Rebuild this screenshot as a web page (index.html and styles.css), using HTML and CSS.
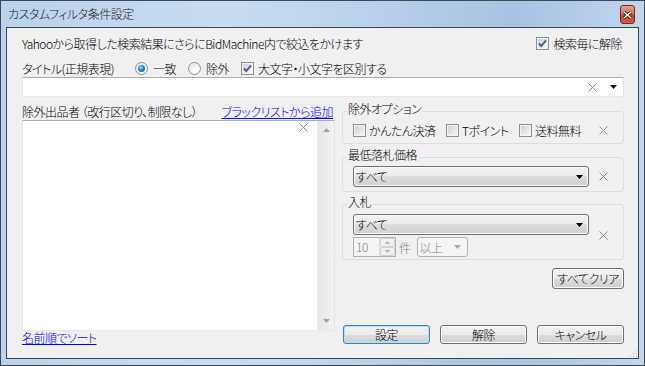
FILE: index.html
```html
<!DOCTYPE html>
<html lang="ja">
<head>
    <meta charset="utf-8" />
    <title>カスタムフィルタ条件設定</title>
    <link rel="stylesheet" href="styles.css">
</head>
<body>
    <div class="window">
        <div class="titlebar">
            <span class="caption">カスタムフィルタ条件設定</span>
            <span class="close-btn">
                <svg width="9" height="8" viewBox="0 0 9 8"><path d="M1 1L8 7M8 1L1 7" stroke="#4a1d14" stroke-width="3.2" /><path d="M1 1L8 7M8 1L1 7" stroke="#fff" stroke-width="1.6" /></svg>
            </span>
        </div>
        <div class="client">
            <div class="row row-info">
                <span>Yahooから取得した検索結果にさらにBidMachine内で絞込をかけます</span>
                <label class="check"><span class="cb"><svg width="11" height="11" viewBox="0 0 11 11"><path d="M2 5.5L4.3 8L9 2.3" fill="none" stroke="#4b5d8f" stroke-width="1.9" /></svg></span>検索毎に解除</label>
            </div>
            <div class="row row-title">
                <span class="title-label">タイトル(正規表現)</span>
                <label class="opt"><span class="rb on"></span>一致</label>
                <label class="opt"><span class="rb"></span>除外</label>
                <label class="check"><span class="cb"><svg width="11" height="11" viewBox="0 0 11 11"><path d="M2 5.5L4.3 8L9 2.3" fill="none" stroke="#4b5d8f" stroke-width="1.9" /></svg></span>大文字・小文字を区別する</label>
            </div>
            <div class="combo-text">
                <svg class="x-icon" width="9" height="9" viewBox="0 0 9 9"><path d="M0.5 0.5L8.5 8.5M8.5 0.5L0.5 8.5" stroke="#8c8c8c" /></svg>
                <svg class="arrow" width="7" height="4" viewBox="0 0 7 4"><path d="M0 0H7L3.5 4Z" fill="#000" /></svg>
            </div>

            <div class="main">
                <div class="left">
                    <div class="list-head">
                        <span>除外出品者 （改行区切り、制限なし）</span>
                        <a href="#">ブラックリストから追加</a>
                    </div>
                    <div class="list-box">
                        <div class="list-area">
                            <svg class="x-icon" width="9" height="9" viewBox="0 0 9 9"><path d="M0.5 0.5L8.5 8.5M8.5 0.5L0.5 8.5" stroke="#8c8c8c" /></svg>
                        </div>
                        <div class="scrollbar">
                            <svg width="7" height="4" viewBox="0 0 7 4"><path d="M0 4H7L3.5 0Z" fill="#a3a3a3" /></svg>
                            <svg width="7" height="4" viewBox="0 0 7 4"><path d="M0 0H7L3.5 4Z" fill="#a3a3a3" /></svg>
                        </div>
                    </div>
                    <a class="sort-link" href="#">名前順でソート</a>
                </div>

                <div class="right">
                    <div class="group g-options">
                        <div class="group-title"><span>除外オプション</span></div>
                        <div class="group-body">
                            <div class="checks">
                                <label class="check c1"><span class="cb"></span>かんたん決済</label>
                                <label class="check c2"><span class="cb"></span>Tポイント</label>
                                <label class="check"><span class="cb"></span>送料無料</label>
                            </div>
                            <svg class="x-icon" width="9" height="9" viewBox="0 0 9 9"><path d="M0.5 0.5L8.5 8.5M8.5 0.5L0.5 8.5" stroke="#8c8c8c" /></svg>
                        </div>
                    </div>

                    <div class="group g-price">
                        <div class="group-title"><span>最低落札価格</span></div>
                        <div class="group-body">
                            <div class="fields">
                                <div class="dd"><span>すべて</span><svg width="7" height="4" viewBox="0 0 7 4"><path d="M0 0H7L3.5 4Z" fill="#000" /></svg></div>
                            </div>
                            <svg class="x-icon" width="9" height="9" viewBox="0 0 9 9"><path d="M0.5 0.5L8.5 8.5M8.5 0.5L0.5 8.5" stroke="#8c8c8c" /></svg>
                        </div>
                    </div>

                    <div class="group g-bid">
                        <div class="group-title"><span>入札</span></div>
                        <div class="group-body">
                            <div class="fields">
                                <div class="dd"><span>すべて</span><svg width="7" height="4" viewBox="0 0 7 4"><path d="M0 0H7L3.5 4Z" fill="#000" /></svg></div>
                                <div class="count-row">
                                    <div class="spin">
                                        <span>10</span>
                                        <div class="spin-btns">
                                            <span><svg width="5" height="3" viewBox="0 0 5 3"><path d="M0 3H5L2.5 0Z" fill="#b0b0b0" /></svg></span>
                                            <span><svg width="5" height="3" viewBox="0 0 5 3"><path d="M0 0H5L2.5 3Z" fill="#b0b0b0" /></svg></span>
                                        </div>
                                    </div>
                                    <span class="unit">件</span>
                                    <div class="dd disabled"><span>以上</span><svg width="7" height="4" viewBox="0 0 7 4"><path d="M0 0H7L3.5 4Z" fill="#a8a8a8" /></svg></div>
                                </div>
                            </div>
                            <svg class="x-icon" width="9" height="9" viewBox="0 0 9 9"><path d="M0.5 0.5L8.5 8.5M8.5 0.5L0.5 8.5" stroke="#8c8c8c" /></svg>
                        </div>
                    </div>

                    <button class="btn clear-all">すべてクリア</button>

                    <div class="actions">
                        <button class="btn default">設定</button>
                        <button class="btn">解除</button>
                        <button class="btn">キャンセル</button>
                    </div>
                </div>
            </div>

            <svg class="grip" width="10" height="10" viewBox="0 0 10 10">
                <rect x="8" y="2" width="1" height="1" fill="#b8b8b8" />
                <rect x="5" y="5" width="1" height="1" fill="#b8b8b8" />
                <rect x="8" y="5" width="1" height="1" fill="#b8b8b8" />
                <rect x="2" y="8" width="1" height="1" fill="#b8b8b8" />
                <rect x="5" y="8" width="1" height="1" fill="#b8b8b8" />
                <rect x="8" y="8" width="1" height="1" fill="#b8b8b8" />
            </svg>
        </div>
    </div>
</body>
</html>
```

FILE: styles.css
```css
* {
    margin: 0;
    padding: 0;
    box-sizing: border-box;
}

body {
    font-family: "Noto Sans CJK JP", "Noto Sans", sans-serif;
    font-size: 12px;
    font-weight: 300;
    font-feature-settings: "palt" 1;
    letter-spacing: -0.5px;
    color: #000;
    background: #fff;
}

.window {
    width: 645px;
    height: 366px;
    border: 1px solid #3b4858;
    padding: 0 5px 6px;
    display: flex;
    flex-direction: column;
    background: linear-gradient(to right, #bcd2ea 0%, #c9dcf0 35%, #b9cfe8 60%, #a9c2df 80%, #c2d6ec 100%);
}

.titlebar {
    height: 26px;
    display: flex;
    justify-content: space-between;
    padding: 0 4px 0 2px;
}

.caption {
    line-height: 26px;
    color: #1b1b1b;
    white-space: nowrap;
}

.close-btn {
    margin-top: 4px;
    width: 15px;
    height: 19px;
    display: flex;
    align-items: center;
    justify-content: center;
    border: 1px solid #6e2a1f;
    border-radius: 3px;
    background: linear-gradient(#e3a391 0%, #d47660 45%, #c2402a 55%, #d0623f 100%);
}

.client {
    position: relative;
    flex: 1;
    border: 1px solid #3c4651;
    background: #f0f0f0;
    padding: 7px 14px 0 15px;
    display: flex;
    flex-direction: column;
}

.row {
    height: 16px;
    display: flex;
    align-items: center;
    white-space: nowrap;
}

.row-info {
    justify-content: space-between;
    padding-right: 2px;
}

.row-title {
    margin-top: 9px;
}

.title-label {
    width: 113px;
}

.check,
.opt {
    display: flex;
    align-items: center;
    white-space: nowrap;
}

.opt {
    width: 53px;
}

.cb {
    width: 13px;
    height: 13px;
    margin-right: 4px;
    border: 1px solid #8e8f8f;
    background: linear-gradient(135deg, #cdd1d6 10%, #f7f7f7 90%);
    box-shadow: inset 0 0 0 1px #f4f4f4;
    display: flex;
    align-items: center;
    justify-content: center;
}

.rb {
    width: 13px;
    height: 13px;
    margin-right: 5px;
    border: 1px solid #8e8f8f;
    border-radius: 50%;
    background: radial-gradient(circle at 60% 65%, #fbfbfb 20%, #d4d7db 90%);
    box-shadow: inset 0 0 0 1px #f4f4f4;
    display: flex;
    align-items: center;
    justify-content: center;
}

    .rb.on::after {
        content: "";
        width: 7px;
        height: 7px;
        border-radius: 50%;
        background: radial-gradient(circle at 40% 35%, #9fdcfa 0%, #2a86c8 45%, #0b4d8c 100%);
    }

.combo-text {
    margin-top: 1px;
    height: 20px;
    background: #fff;
    border: 1px solid #e2e3ea;
    border-top-color: #abadb3;
    border-bottom-color: #e3e9ef;
    display: flex;
    align-items: center;
    justify-content: flex-end;
    padding-right: 6px;
}

    .combo-text .arrow {
        margin-left: 13px;
    }

.main {
    display: grid;
    grid-template-columns: 313px 1fr;
    column-gap: 7px;
}

.left {
    display: flex;
    flex-direction: column;
}

.list-head {
    margin-top: 6px;
    height: 16px;
    display: flex;
    align-items: center;
    justify-content: space-between;
    padding-right: 2px;
    white-space: nowrap;
}

a {
    color: #0000ff;
}

.list-box {
    margin-top: 1px;
    height: 211px;
    background: #fff;
    border: 1px solid #e2e3ea;
    border-top-color: #abadb3;
    border-bottom-color: #e3e9ef;
    display: flex;
}

.list-area {
    flex: 1;
    display: flex;
    justify-content: flex-end;
    align-items: flex-start;
    padding: 2px 9px 0 0;
}

.scrollbar {
    width: 17px;
    background: linear-gradient(to right, #e6e6e6, #f2f2f2);
    border-left: 1px solid #ececec;
    display: flex;
    flex-direction: column;
    justify-content: space-between;
    align-items: center;
    padding: 7px 0 7px;
}

.sort-link {
    height: 14px;
    line-height: 14px;
    align-self: flex-start;
    white-space: nowrap;
}

.right {
    display: flex;
    flex-direction: column;
}

.group-title {
    height: 14px;
    line-height: 14px;
    margin-bottom: -5px;
    padding-left: 5px;
    white-space: nowrap;
}

    .group-title span {
        background: #f0f0f0;
        padding: 0 1px;
    }

.group-body {
    border: 1px solid #d5dfe5;
    border-radius: 3px;
    display: flex;
    align-items: center;
    padding-left: 10px;
    padding-right: 15px;
}

    .group-body .x-icon {
        margin-left: 10px;
    }

.g-options {
    margin-top: 5px;
}

    .g-options .group-body {
        padding-top: 11px;
        padding-bottom: 6px;
    }

.checks {
    flex: 1;
    height: 14px;
    display: flex;
    align-items: center;
}

    .checks .cb {
        margin-right: 3px;
    }

.c1 {
    width: 93px;
}

.c2 {
    width: 73px;
}

.g-price {
    margin-top: 4px;
}

    .g-price .group-body {
        padding-top: 8px;
        padding-bottom: 4px;
    }

.g-bid {
    margin-top: 3px;
}

    .g-bid .group-body {
        padding-top: 9px;
        padding-bottom: 2px;
    }

.fields {
    flex: 1;
    display: flex;
    flex-direction: column;
}

.dd {
    height: 21px;
    border: 1px solid #707070;
    border-radius: 3px;
    background: linear-gradient(#f2f2f2 0%, #ebebeb 50%, #dddddd 50%, #cfcfcf 100%);
    box-shadow: inset 0 0 0 1px #fbfbfb;
    display: flex;
    align-items: center;
    justify-content: space-between;
    padding: 0 5px 0 2px;
    white-space: nowrap;
}

    .dd.disabled {
        width: 51px;
        height: 20px;
        border-color: #adb2b5;
        background: #f4f4f4;
        box-shadow: none;
        color: #838383;
        padding-right: 6px;
    }

.count-row {
    margin-top: 2px;
    height: 20px;
    display: flex;
    align-items: center;
}

.spin {
    width: 43px;
    height: 20px;
    border: 1px solid #adb2b5;
    background: #f4f4f4;
    color: #838383;
    display: flex;
    justify-content: space-between;
    padding-left: 2px;
    line-height: 18px;
}

.spin-btns {
    width: 16px;
    display: flex;
    flex-direction: column;
    border-left: 1px solid #d9d9d9;
}

    .spin-btns span {
        flex: 1;
        display: flex;
        align-items: center;
        justify-content: center;
        border: 1px solid #d2d2d2;
        border-radius: 2px;
        background: #f0f0f0;
    }

.unit {
    color: #838383;
    margin: 0 6px 0 3px;
}

.btn {
    font-family: inherit;
    font-size: 12px;
    font-weight: 300;
    font-feature-settings: "palt" 1;
    letter-spacing: -0.5px;
    color: #000;
    border: 1px solid #707070;
    border-radius: 3px;
    background: linear-gradient(#f2f2f2 0%, #ebebeb 50%, #dddddd 50%, #cfcfcf 100%);
    box-shadow: inset 0 0 0 1px #fcfcfc;
    white-space: nowrap;
}

    .btn.default {
        border-color: #3c7fb1;
        box-shadow: inset 0 0 0 1px #aee4fa;
    }

.clear-all {
    margin-top: 8px;
    align-self: flex-end;
    width: 72px;
    height: 21px;
}

.actions {
    margin-top: auto;
    margin-bottom: 1px;
    padding-left: 1px;
    display: flex;
    justify-content: space-between;
}

    .actions .btn {
        width: 87px;
        height: 19px;
        line-height: 15px;
    }

.grip {
    position: absolute;
    right: 0;
    bottom: 0;
}
```
